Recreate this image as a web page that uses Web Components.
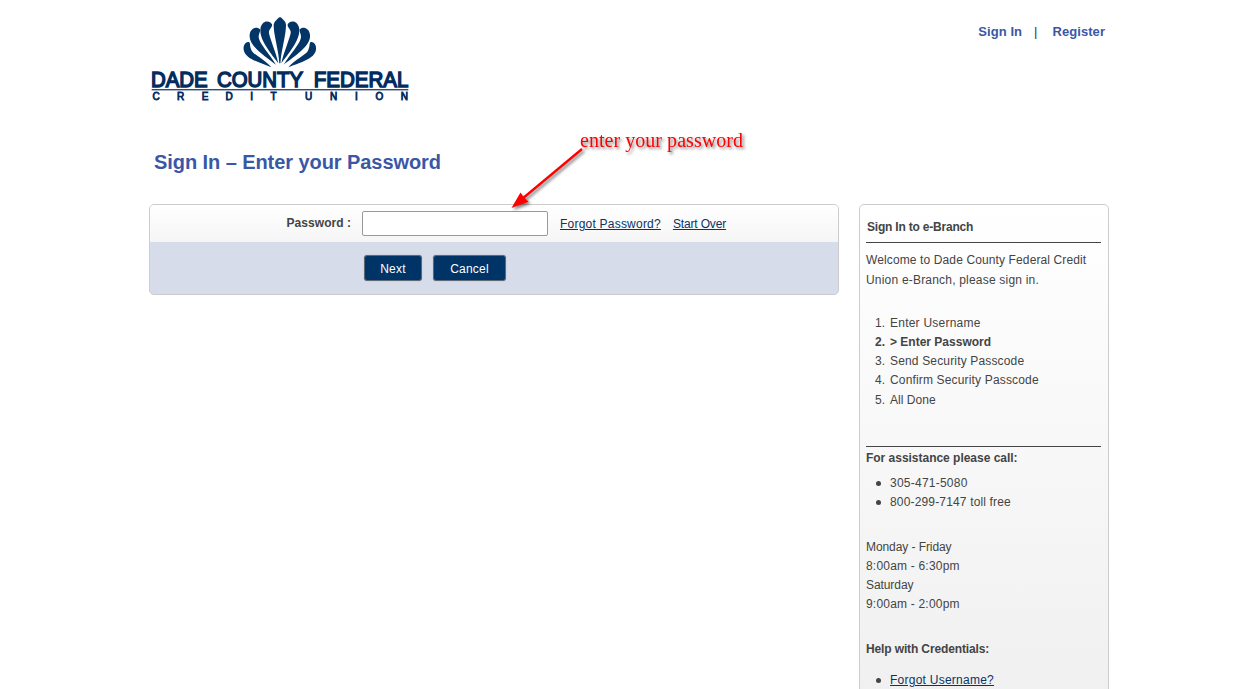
<!DOCTYPE html>
<html lang="en">
<head>
<meta charset="utf-8">
<title>Sign In – Enter your Password</title>
<style>
html,body{margin:0;height:100%;overflow:hidden;background:#fff}
body{font:12px "Liberation Sans",Arial,sans-serif;color:#444}
</style>
</head>
<body>
<app-page></app-page>
<script>
const define = (name, html) => customElements.define(name, class extends HTMLElement {
  constructor() {
    super();
    const t = document.createElement('template');
    t.innerHTML = html;
    this.attachShadow({mode: 'open'}).appendChild(t.content.cloneNode(true));
  }
});

define('brand-logo', `
<style>
:host{display:block;width:270px;height:96px}
svg{display:block}
text{font-family:"Liberation Sans",Arial,sans-serif;fill:#022c5f}
.name{font-size:65px;stroke:#022c5f;stroke-width:4.4}
.sub{font-size:30px;stroke:#022c5f;stroke-width:2.4;text-anchor:middle}
</style>
<svg width="270" height="96" viewBox="0 0 810 288">
  <defs>
    <g id="side" fill="#033566">
      <path d="M409 160 C417 125 433 90 437 70 C439 57 426 54 428 43 C434 31 456 30 462 52 C469 84 438 122 409 160Z"/>
      <path d="M416 164 C438 128 462 105 467 86 C471 74 462 68 464 58 C472 49 492 52 495 74 C499 108 448 138 416 164Z"/>
      <path d="M430 172 C450 148 482 135 489 122 C496 108 492 103 496 97 C507 93 515 107 513 119 C508 148 464 157 430 172Z"/>
    </g>
  </defs>
  <path fill="#033566" d="M403 160 C401 120 386 75 386 46 C387 34 394 31 398 26 Q405 18 412 26 C416 31 423 34 423 46 C423 75 409 120 406 160Z"/>
  <use href="#side"/><use href="#side" transform="translate(809 0) scale(-1 1)"/>
  <text class="name" x="18" y="231" textLength="170" lengthAdjust="spacingAndGlyphs">DADE</text>
  <text class="name" x="216" y="231" textLength="258" lengthAdjust="spacingAndGlyphs">COUNTY</text>
  <text class="name" x="506" y="231" textLength="284" lengthAdjust="spacingAndGlyphs">FEDERAL</text>
  <rect x="20" y="237.500" width="770" height="3.500" fill="#022c5f"/>
  <text class="sub" y="270" x="33 107 180 252 320 386">CREDIT</text>
  <text class="sub" y="270" x="491 566 634 703 778">UNION</text>
</svg>`);

define('top-links', `
<style>
:host{display:flex;font:700 13px/16px "Liberation Sans",Arial,sans-serif;color:#3a57a6}
.bar{font-weight:400;color:#333;margin:0 15px 0 12px}
span{letter-spacing:.06px}
</style>
<span>Sign In</span><span class="bar">|</span><span>Register</span>`);

define('action-button', `
<style>
:host{display:block;box-sizing:border-box;height:26px;border:1px solid #5d6a75;border-radius:3px;background:#036;color:#fff;font-size:12px;line-height:26px;text-align:center;letter-spacing:.2px;box-shadow:0 0 1px rgba(90,90,90,.6)}
</style><slot></slot>`);

define('text-link', `
<style>
:host{display:inline;color:#0b3366;text-decoration:underline}
</style><slot></slot>`);

define('password-form', `
<style>
:host{display:block;box-sizing:border-box;width:690px;height:91px;border:1px solid #ccc;border-radius:5px;overflow:hidden;background:#d7dceb}
.row{display:flex;height:37px;background:linear-gradient(#fff,#f5f5f5);line-height:20px}
label{width:201px;text-align:right;font-weight:700;padding-top:8px;letter-spacing:.04px}
input{box-sizing:border-box;width:186px;height:25px;margin:6px 12px 0 11px;border:1px solid #999;border-radius:2px;background:#fff;padding:0}
text-link{padding-top:9px;margin-right:12px;letter-spacing:.22px}
text-link+text-link{letter-spacing:-.15px}
.actions{display:flex;gap:11px;padding:13px 0 0 214px}
.n{width:58px}.c{width:73px}
</style>
<div class="row"><label for="p">Password :</label><input id="p" type="password"><text-link>Forgot Password?</text-link><text-link>Start Over</text-link></div>
<div class="actions"><action-button class="n">Next</action-button><action-button class="c">Cancel</action-button></div>`);

define('side-panel', `
<style>
:host{display:block;box-sizing:border-box;width:250px;height:560px;border:1px solid #ccc;border-radius:5px;background:linear-gradient(#fff,#eee);padding:12px 7px 0 6px;line-height:19px}
h3,p,ul,ol{font-size:12px;margin:0;padding:0}
h3{line-height:20px;letter-spacing:-.02px}
.title{padding:0 0 5px 1px;border-bottom:1px solid #444;letter-spacing:-.2px}
.welcome{line-height:20px;margin-top:7px;letter-spacing:.12px}
.second{letter-spacing:.2px}
ol,ul{list-style:none}
li{display:flex;letter-spacing:.16px}
ol{margin-top:24px;counter-reset:n;height:96px}
ol li{counter-increment:n}
ol li::before{content:counter(n) ".";width:15px;margin-left:9px;letter-spacing:0}
ol li.cur{font-weight:700;letter-spacing:0}
ol li:last-child{margin-top:1px;letter-spacing:.05px}
ul li::before{content:"";width:5px;height:5px;border-radius:50%;background:#444;margin:7px 9px 0 10px}
.help{margin-top:36px;border-top:1px solid #444;padding-top:1px}
.hours{margin-top:26px;letter-spacing:.2px}
.day{letter-spacing:-.08px}
</style>
<h3 class="title">Sign In to e-Branch</h3>
<p class="welcome">Welcome to Dade County Federal Credit<br><span class="second">Union e-Branch, please sign in.</span></p>
<ol><li style="letter-spacing:.23px">Enter Username</li><li class="cur">&gt; Enter Password</li><li>Send Security Passcode</li><li>Confirm Security Passcode</li><li>All Done</li></ol>
<h3 class="help">For assistance please call:</h3>
<ul style="margin-top:6px"><li style="letter-spacing:.24px">305-471-5080</li><li>800-299-7147 toll free</li></ul>
<p class="hours"><span class="day">Monday - Friday</span><br>8:00am - 6:30pm<br><span class="day">Saturday</span><br>9:00am - 2:00pm</p>
<h3 style="margin-top:25px;letter-spacing:-.13px">Help with Credentials:</h3>
<ul style="margin-top:12px"><li style="letter-spacing:.25px"><text-link>Forgot Username?</text-link></li></ul>`);

define('callout-note', `
<style>
:host{display:block;position:absolute;left:500px;top:125px;width:260px;height:95px;pointer-events:none}
svg{display:block;overflow:visible;filter:drop-shadow(2.500px 2.500px 1.500px rgba(0,0,0,.5))}
text{font:20px "Liberation Serif","Times New Roman",serif;fill:red}
</style>
<svg width="260" height="95"><text x="80" y="22" textLength="163">enter your password</text>
<path d="M82 24 L22 74" stroke="red" stroke-width="2.300"/><path d="M11.500 83 L20.500 67.500 L24 72.500 L28.500 76.700Z" fill="red"/></svg>`);

define('app-page', `
<style>
:host{display:block;width:960px;padding:0 146px 0 149px;height:689px;overflow:hidden}
header{display:flex;justify-content:space-between;height:139px}
brand-logo{margin:10px 0 0 -4px}
top-links{margin:24px 4px 0 0}
h1{margin:0 0 0 5px;font-size:20px;line-height:46px;height:65px;color:#3a57a6;letter-spacing:-.07px}
main{display:flex;justify-content:space-between;align-items:flex-start}
</style>
<header><brand-logo></brand-logo><top-links></top-links></header>
<h1>Sign In – Enter your Password</h1>
<main><password-form></password-form><side-panel></side-panel></main>
<callout-note></callout-note>`);
</script>
</body>
</html>
